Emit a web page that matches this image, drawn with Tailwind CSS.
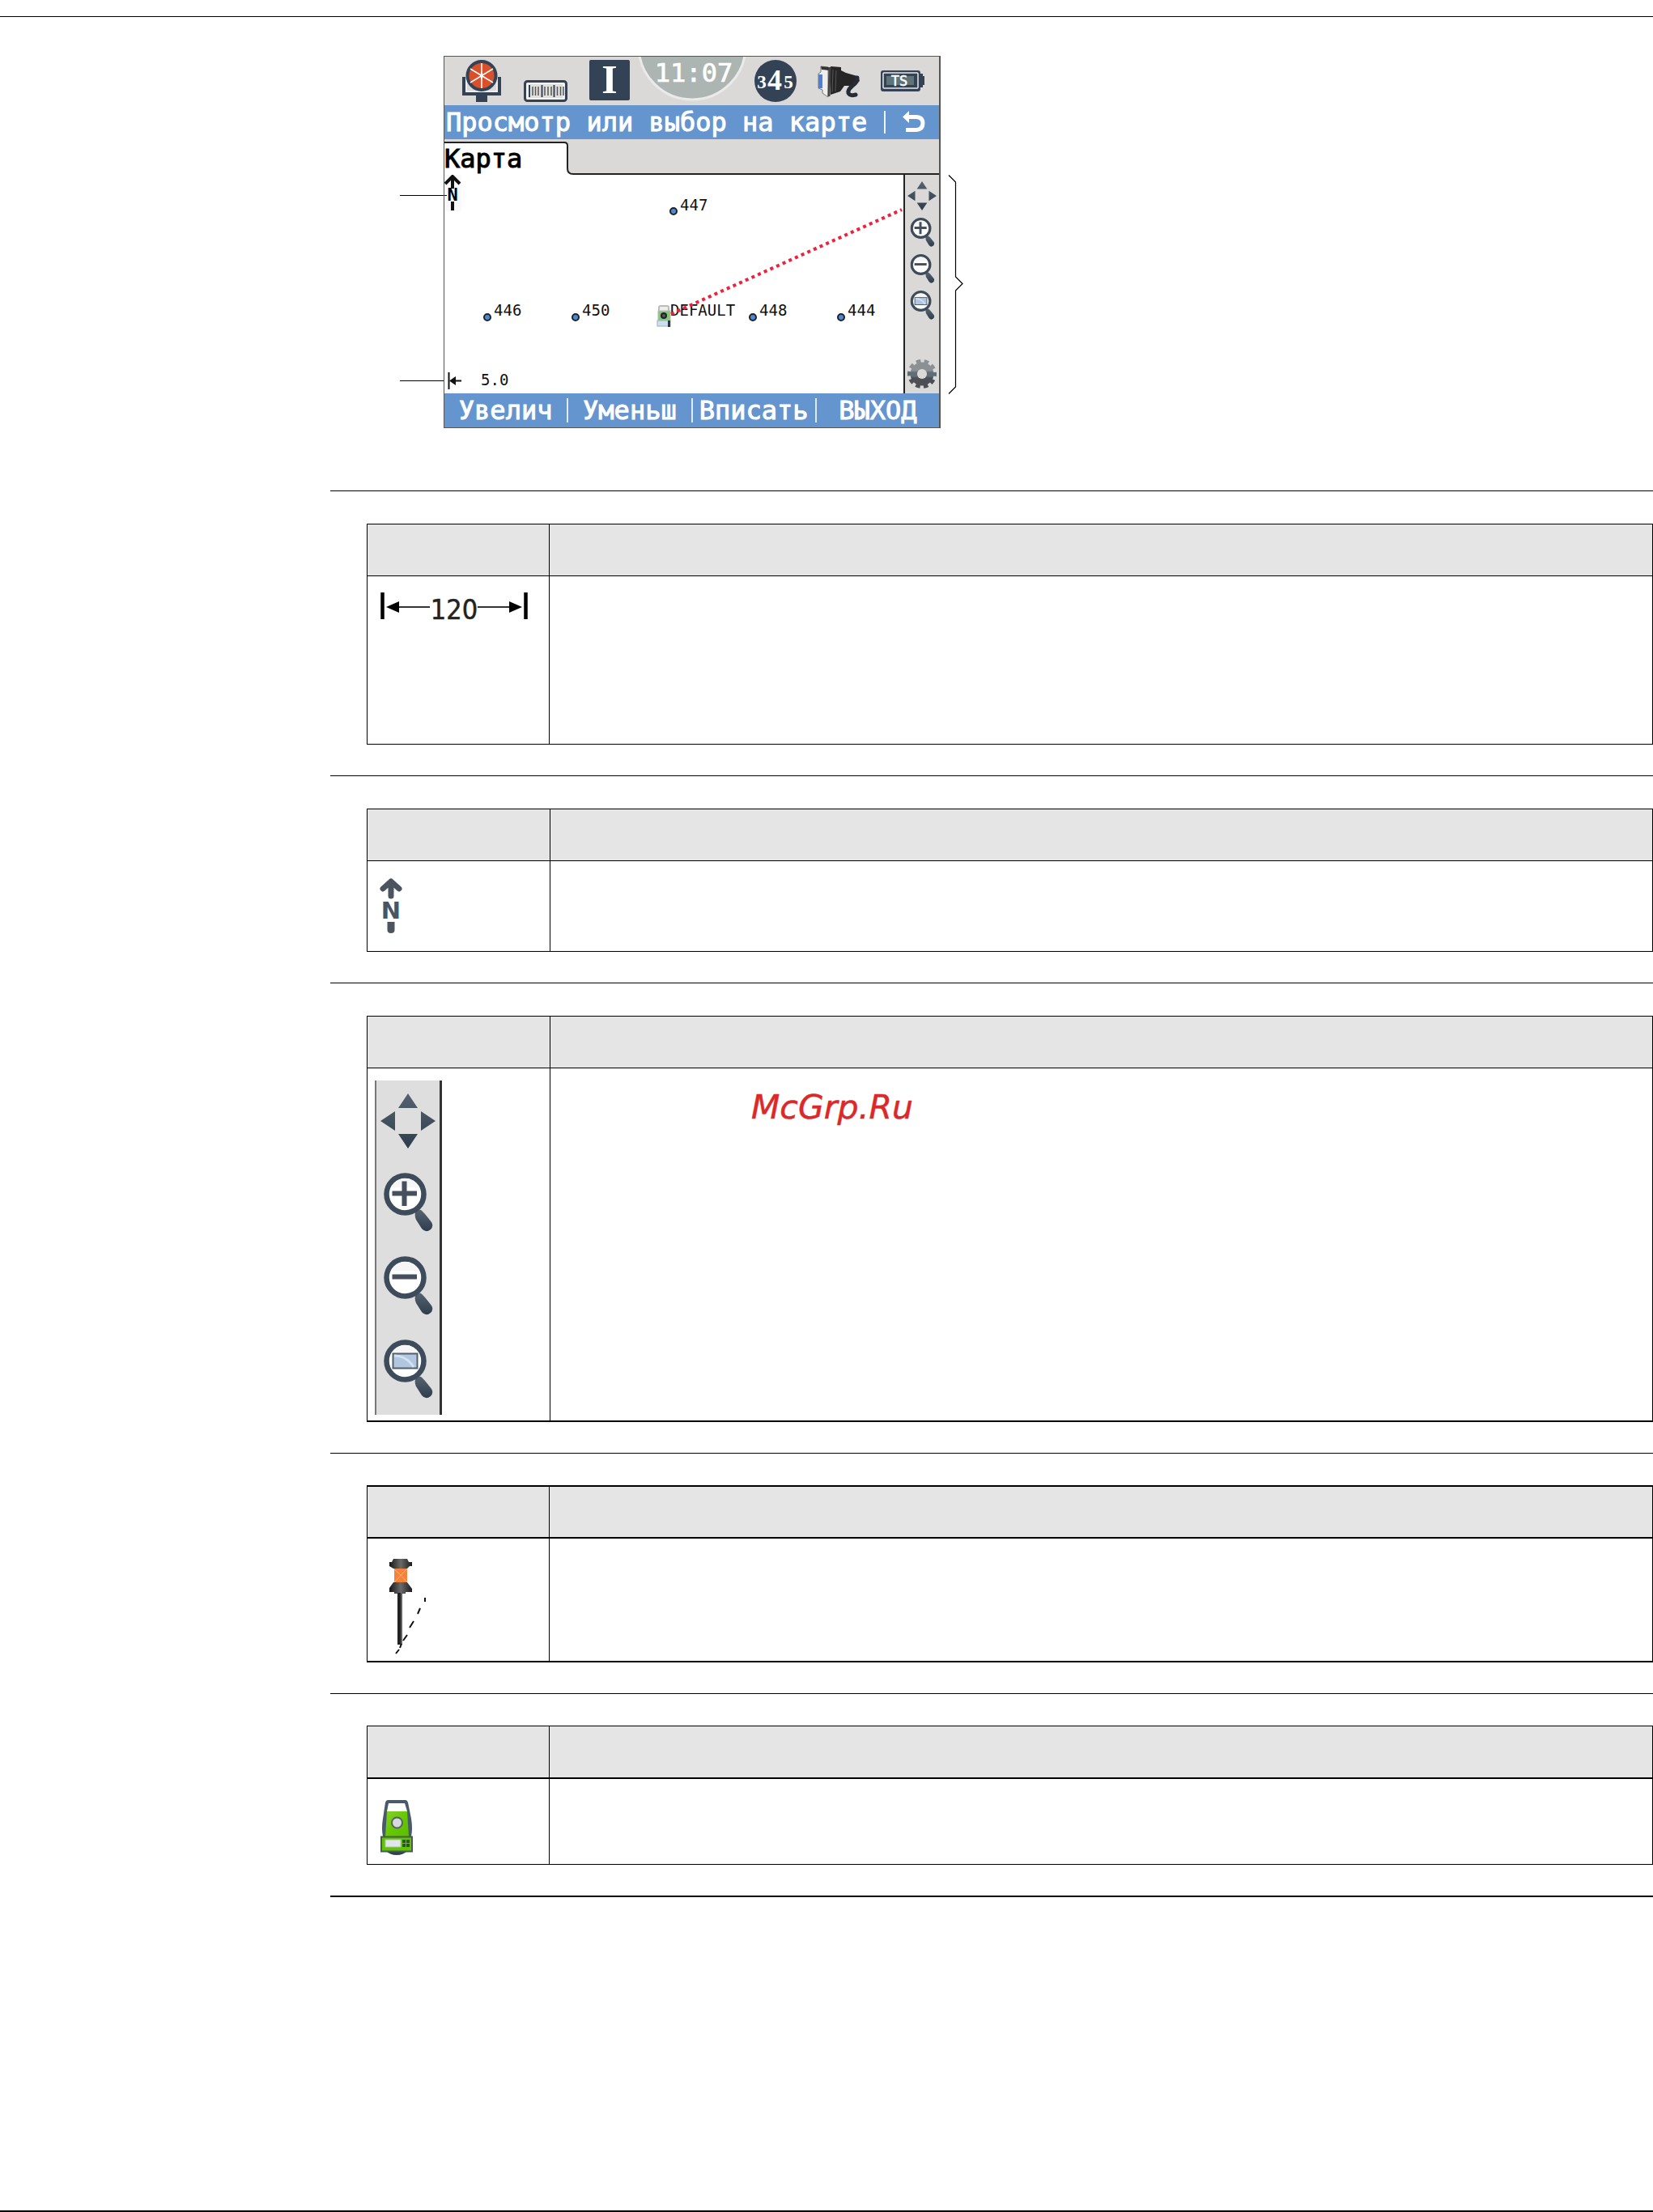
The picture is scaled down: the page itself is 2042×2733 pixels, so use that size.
<!DOCTYPE html>
<html lang="ru">

<head>
    <meta charset="UTF-8">
    <meta name="viewport" content="width=device-width, initial-scale=1.0">
    <title>Просмотр или выбор на карте</title>
    <script src="https://cdn.jsdelivr.net/npm/@tailwindcss/browser@4"></script>
</head>

<body class="flex min-h-screen flex-col bg-white font-['DejaVu_Sans',sans-serif] text-black">

    <!-- Shared icon shapes -->
    <svg class="absolute h-0 w-0" aria-hidden="true">
        <defs>
            <linearGradient id="steel" x1="0" y1="0" x2="0" y2="1">
                <stop offset="0" stop-color="#566270" />
                <stop offset="1" stop-color="#2e3d4c" />
            </linearGradient>
            <linearGradient id="gearFill" x1="0" y1="0" x2="0" y2="1">
                <stop offset="0.3" stop-color="#8b9094" />
                <stop offset="0.4" stop-color="#5f6d78" />
                <stop offset="0.65" stop-color="#5f6d78" />
                <stop offset="0.75" stop-color="#4c4f53" />
            </linearGradient>
            <linearGradient id="capFill" x1="0" y1="0" x2="1" y2="0">
                <stop offset="0" stop-color="#161616" />
                <stop offset="0.5" stop-color="#6a6a6a" />
                <stop offset="1" stop-color="#1c1c1c" />
            </linearGradient>
            <linearGradient id="bodyFill" x1="0" y1="0" x2="1" y2="1">
                <stop offset="0" stop-color="#86cf2c" />
                <stop offset="0.5" stop-color="#66c803" />
                <stop offset="1" stop-color="#5cbc00" />
            </linearGradient>
        </defs>
        <symbol id="pan" viewBox="0 0 68 68">
            <path d="M34 0L46 18H22ZM34 68L46 50H22ZM0 34L18 22V46ZM68 34L50 22V46Z" fill="url(#steel)" />
        </symbol>
        <symbol id="lens" viewBox="0 0 61 73">
            <path d="M39 49Q41 45 46 46Q49 48 59 61Q62 66 58 70Q52 75 47 69L40 58Q38 54 39 49Z" fill="url(#steel)" />
            <circle cx="26.500" cy="26.500" r="23" fill="#fff" stroke="#3d4b5a" stroke-width="6.500" />
            <path d="M9 18A19.500 19.500 0 0 1 44 18Z" fill="#f6f6f6" />
        </symbol>
        <symbol id="zoom-in" viewBox="0 0 61 73">
            <use href="#lens" width="61" height="73" />
            <path d="M10.500 25.500H41M25.500 10.500V41" stroke="#454f5e" stroke-width="6" />
        </symbol>
        <symbol id="zoom-out" viewBox="0 0 61 73">
            <use href="#lens" width="61" height="73" />
            <path d="M10.500 25.500H41" stroke="#454f5e" stroke-width="6" />
        </symbol>
        <symbol id="zoom-fit" viewBox="0 0 61 73">
            <use href="#lens" width="61" height="73" />
            <rect x="11.500" y="17.500" width="30" height="18" fill="#b3c6e0" stroke="#50606f" stroke-width="2" />
            <path d="M13 20Q28 20 37 34" fill="none" stroke="#d3e2f2" stroke-width="3" />
        </symbol>
        <symbol id="gear" viewBox="0 0 36 36">
            <circle cx="18" cy="18" r="15.500" fill="none" stroke="url(#gearFill)" stroke-width="5" stroke-dasharray="5.500 4.239" stroke-dashoffset="2.700" />
            <circle cx="18" cy="18" r="10" fill="#dad9d7" stroke="url(#gearFill)" stroke-width="9" />
            <circle cx="18" cy="18" r="6" fill="#dad9d7" />
        </symbol>
    </svg>

    <header class="mt-5 border-t border-black"></header>

    <figure class="mt-12 flex pl-[494px]">
        <!-- Leader lines to the north arrow and the scale -->
        <svg class="h-[460px] w-[54px] shrink-0" viewBox="0 0 54 460" aria-hidden="true">
            <path d="M0 172.500H54M0 401.500H54" stroke="#000" />
        </svg>

        <div class="w-[614px] shrink-0 border border-r-2 border-[#555] bg-[#dad9d7] font-['DejaVu_Sans_Mono',monospace] text-[32px]">

            <!-- Status bar -->
            <div class="flex h-[60px] items-start px-1.5">
                <div class="flex flex-1 justify-center pt-1">
                    <svg class="h-[52px] w-[54px]" viewBox="0 0 54 52" aria-label="Prism">
                        <path d="M5 21V42H49V21" fill="none" stroke="#344256" stroke-width="4" />
                        <path d="M8 24V39H46V24" fill="none" stroke="#eee" stroke-width="2" />
                        <rect x="20" y="42" width="14" height="10" fill="#344256" />
                        <circle cx="27" cy="19.500" r="17.500" fill="#d9502a" stroke="#344256" stroke-width="4" />
                        <path d="M27 4V35M13 11L41 28M41 11L13 28" stroke="#fff" stroke-width="1.500" />
                        <path d="M27 14L29 19L27 25L25 19Z" fill="#fff" />
                    </svg>
                </div>
                <div class="flex flex-1 justify-center pt-1">
                    <svg class="h-[52px] w-[54px]" viewBox="0 0 54 52" aria-label="Level">
                        <rect x="1.500" y="26.500" width="51" height="24" rx="3" fill="#f2f2f2" stroke="#344256" stroke-width="3" />
                        <path d="M6 30H48V47H6Z" fill="#e0e0de" />
                        <path d="M7 31V46M22.500 31V46M37.500 31V46" stroke="#344256" stroke-width="2" />
                        <path d="M11 33V44M14.500 33V44M18 33V44M26 33V44M30 33V44M34 33V44M41.500 33V44M45.500 33V44M49 33V44" stroke="#555" stroke-width="1.500" />
                    </svg>
                </div>
                <div class="flex flex-1 justify-center pt-1">
                    <svg class="h-[52px] w-[54px] overflow-visible font-['Liberation_Serif',serif] font-bold" viewBox="0 0 54 52">
                        <rect x="2" y="0" width="50" height="50" rx="2" fill="#344256" />
                        <text x="27" y="41" text-anchor="middle" font-size="50" fill="#fff">I</text>
                    </svg>
                </div>
                <div class="flex w-[125px] shrink-0 justify-center">
                    <svg class="h-[58px] w-[136px] shrink-0" viewBox="0 0 136 58">
                        <circle cx="68" cy="-13" r="66" fill="#adb5b3" stroke="#eaeaea" stroke-width="3" />
                        <text x="70" y="31" text-anchor="middle" font-size="32" fill="#fff" stroke="#fff" stroke-width="0.700">11:07</text>
                    </svg>
                </div>
                <div class="flex flex-1 justify-center pt-1">
                    <svg class="h-[52px] w-[54px] font-['Liberation_Serif',serif] font-bold" viewBox="0 0 54 52">
                        <circle cx="28" cy="26" r="26" fill="#344256" />
                        <text x="11" y="35" text-anchor="middle" font-size="23" fill="#fff">3</text>
                        <text x="27" y="37" text-anchor="middle" font-size="36" fill="#fff">4</text>
                        <text x="44" y="35" text-anchor="middle" font-size="23" fill="#fff">5</text>
                    </svg>
                </div>
                <div class="flex flex-1 justify-center pt-1">
                    <svg class="h-[52px] w-[54px]" viewBox="0 0 54 52" aria-label="Plug">
                        <path d="M5 8L14 9V46L7 41V37L2 35V17L5 15Z" fill="#eee" stroke="#777" />
                        <path d="M2 18H7V35H2Z" fill="#4a80d8" />
                        <path d="M5 8L15 9V13L6 12Z" fill="#333" />
                        <path d="M17 8L30 9V13L36 16L50 20L53 26L45 32L34 32L29 39L17 43Z" fill="#262626" />
                        <path d="M50 22Q51 27 44 32Q38 37 39 41Q41 45 48 43" fill="none" stroke="#262c36" stroke-width="5" stroke-linecap="round" />
                        <path d="M16 9L15 45" stroke="#444" stroke-width="3" />
                        <path d="M20 12L19 40M24 13L23 39" stroke="#555" />
                    </svg>
                </div>
                <div class="flex flex-1 justify-center pt-1">
                    <svg class="h-[52px] w-[54px]" viewBox="0 0 54 52">
                        <path d="M48 17H52V20H54V31H52V34H48Z" fill="#344256" />
                        <rect x="0" y="13" width="49" height="26" rx="3" fill="#344256" />
                        <rect x="3" y="16" width="43" height="19" rx="1" fill="#344256" stroke="#e8e8e8" stroke-width="1.500" />
                        <rect x="7" y="20" width="34" height="11" fill="#5f7478" />
                        <text x="23" y="32" text-anchor="middle" font-size="17" fill="#fff" stroke="#fff" stroke-width="0.500">TS</text>
                    </svg>
                </div>
            </div>

            <!-- Title bar -->
            <div class="flex items-center bg-[#6495ce] text-white">
                <h1 class="flex-1 pl-0.5 leading-[42px] whitespace-nowrap [-webkit-text-stroke:1px]">Просмотр или выбор на карте</h1>
                <div class="h-7 w-0.5 bg-white/90"></div>
                <button type="button" class="flex w-[66px] justify-center pl-1" aria-label="Назад">
                    <svg class="h-7 w-7" viewBox="0 0 28 28">
                        <path d="M6 7.500H17Q25 8 25 15Q25 23 17 23.500H4" fill="none" stroke="#fff" stroke-width="5" />
                        <path d="M0 7.500L8 0V15Z" fill="#fff" />
                    </svg>
                </button>
            </div>

            <!-- Tab strip -->
            <div class="flex h-[44px]">
                <button type="button" class="mt-[3px] w-[145px] border-t-2 border-[#222] bg-white text-left leading-[39px] [-webkit-text-stroke:1px]">Карта</button>
                <svg class="h-[44px] w-[18px]" viewBox="0 0 18 44" aria-hidden="true">
                    <path d="M0 4H3Q7 4 7 8V36Q7 43 14 43H18V44H0Z" fill="#fff" />
                    <path d="M0 4H3Q7 4 7 8V36Q7 43 14 43H18" fill="none" stroke="#222" stroke-width="2" />
                </svg>
                <div class="flex-1 border-b-2 border-[#222]"></div>
            </div>

            <!-- Map and its tools -->
            <div class="flex h-[270px]">
                <svg class="h-[270px] min-w-0 flex-1 bg-white" viewBox="0 0 567 270" font-size="19" aria-label="Карта">
                    <rect x="0" y="0" width="21" height="45" fill="#fafafa" />
                    <path d="M10 3V17M1 11L10 2L19 11M10 33V44" fill="none" stroke="#111" stroke-width="4" />
                    <text x="10" y="32" text-anchor="middle" font-size="22" font-weight="bold">N</text>
                    <path d="M0 25.500H3" stroke="#000" />

                    <g fill="#4a8ad8" stroke="#222" stroke-width="2">
                        <circle cx="283" cy="45" r="4" />
                        <circle cx="53" cy="176" r="4" />
                        <circle cx="162" cy="176" r="4" />
                        <circle cx="381" cy="176" r="4" />
                        <circle cx="490" cy="176" r="4" />
                    </g>
                    <g fill="#111">
                        <text x="291" y="44">447</text>
                        <text x="61" y="174">446</text>
                        <text x="170" y="174">450</text>
                        <text x="279" y="174">DEFAULT</text>
                        <text x="389" y="174">448</text>
                        <text x="498" y="174">444</text>
                        <text x="45" y="260">5.0</text>
                    </g>

                    <rect x="265" y="162" width="12" height="8" rx="2" fill="#eee" stroke="#bbb" stroke-width="2" />
                    <rect x="264" y="168" width="15" height="12" fill="#86c67c" stroke="#bbb" />
                    <circle cx="271" cy="174" r="3" fill="#556" stroke="#222" stroke-width="2" />
                    <rect x="263" y="180" width="16" height="7" fill="#c6e2f2" stroke="#aaa" />
                    <path d="M277.500 180V188" stroke="#333" stroke-width="3" />
                    <path d="M280 172L565 43" stroke="#f0203c" stroke-width="4" stroke-dasharray="4 4.400" />

                    <path d="M5.500 244V265" stroke="#111" stroke-width="2" />
                    <path d="M8 254.500H21" stroke="#111" stroke-width="2" />
                    <path d="M6 254.500L14 249V260Z" fill="#111" />
                </svg>
                <div class="flex w-11 shrink-0 flex-col items-center gap-[9px] border-l-2 border-[#222] pt-2 pb-1.5">
                    <button type="button" aria-label="Сдвиг"><svg class="h-9 w-9"><use href="#pan" /></svg></button>
                    <button type="button" aria-label="Увеличить"><svg class="h-9 w-[31px]"><use href="#zoom-in" /></svg></button>
                    <button type="button" aria-label="Уменьшить"><svg class="h-9 w-[31px]"><use href="#zoom-out" /></svg></button>
                    <button type="button" aria-label="Вписать"><svg class="h-9 w-[31px]"><use href="#zoom-fit" /></svg></button>
                    <button type="button" class="mt-auto" aria-label="Настройки"><svg class="h-9 w-9"><use href="#gear" /></svg></button>
                </div>
            </div>

            <!-- Soft keys -->
            <div class="flex items-center bg-[#6495ce] leading-[42px] text-white [-webkit-text-stroke:1px]">
                <button type="button" class="flex-1 basis-0">Увелич</button>
                <div class="h-[30px] w-0.5 bg-white/80"></div>
                <button type="button" class="flex-1 basis-0">Уменьш</button>
                <div class="h-[30px] w-0.5 bg-white/80"></div>
                <button type="button" class="flex-1 basis-0">Вписать</button>
                <div class="h-[30px] w-0.5 bg-white/80"></div>
                <button type="button" class="flex-1 basis-0">ВЫХОД</button>
            </div>
        </div>

        <!-- Brace beside the tools -->
        <svg class="mt-[147px] ml-[9px] h-[271px] w-5 shrink-0" viewBox="0 0 20 271" aria-hidden="true">
            <path d="M1 0.500L9.500 9V126L18 134.500L9.500 143V262L1 270.500" fill="none" stroke="#000" stroke-width="1.200" />
        </svg>
    </figure>

    <main class="mt-[77px] ml-[408px]">
        <section class="border-t border-black pt-10 pb-[38px] pl-[45px]">
            <table class="w-full table-fixed border-separate border-spacing-0 border-t border-l border-black">
                <tr class="h-16 bg-[#e5e5e5]">
                    <th class="w-[225px] border-r border-b border-black"></th>
                    <th class="border-r border-b border-black"></th>
                </tr>
                <tr class="h-[208px] align-top">
                    <td class="border-r border-b border-black pt-5 pl-4">
                        <svg class="h-[34px] w-[182px] overflow-visible font-['DejaVu_Sans_Condensed','DejaVu_Sans',sans-serif]" viewBox="0 0 182 34">
                            <path d="M2.500 0V33M179.500 0V33" stroke="#000" stroke-width="4.500" />
                            <path d="M20 18H61M120 18H162" stroke="#333" stroke-width="2" />
                            <path d="M7 18L23 11V25ZM175 18L159 11V25Z" />
                            <text x="91" y="33" text-anchor="middle" font-size="34" fill="#222" stroke="#222" stroke-width="0.500">120</text>
                        </svg>
                    </td>
                    <td class="border-r border-b border-black"></td>
                </tr>
            </table>
        </section>

        <section class="border-t border-black pt-10 pb-[38px] pl-[45px]">
            <table class="w-full table-fixed border-separate border-spacing-0 border-t border-l border-black">
                <tr class="h-16 bg-[#e5e5e5]">
                    <th class="w-[226px] border-r border-b border-black"></th>
                    <th class="border-r border-b border-black"></th>
                </tr>
                <tr class="h-28 align-top">
                    <td class="border-r border-b border-black pt-5 pl-[15px]">
                        <svg class="h-[70px] w-7" viewBox="0 0 28 70">
                            <path d="M4 14L14 5L24 14M14 7V23" fill="none" stroke="#4b545f" stroke-width="7" stroke-linecap="round" stroke-linejoin="round" />
                            <path d="M9.500 55H18.500V65Q18.500 69 14 69Q9.500 69 9.500 65Z" fill="#4b545f" />
                            <text x="14" y="51" text-anchor="middle" font-size="29" font-weight="bold" fill="#4b545f">N</text>
                        </svg>
                    </td>
                    <td class="border-r border-b border-black"></td>
                </tr>
            </table>
        </section>

        <section class="border-t border-black pt-10 pb-[38px] pl-[45px]">
            <table class="w-full table-fixed border-separate border-spacing-0 border-t border-l border-black">
                <tr class="h-16 bg-[#e5e5e5]">
                    <th class="w-[226px] border-r border-b border-black"></th>
                    <th class="border-r border-b border-black"></th>
                </tr>
                <tr class="h-[437px] align-top">
                    <td class="border-r border-b-2 border-black pt-[15px] pl-[9px]">
                        <div class="flex h-[413px] w-[83px] flex-col items-center gap-[30px] border-r-3 border-l-2 border-r-[#333] border-l-[#777] bg-[#dedede] pt-4">
                            <svg class="h-[68px] w-[68px]"><use href="#pan" /></svg>
                            <svg class="h-[73px] w-[61px]"><use href="#zoom-in" /></svg>
                            <svg class="h-[73px] w-[61px]"><use href="#zoom-out" /></svg>
                            <svg class="h-[73px] w-[61px]"><use href="#zoom-fit" /></svg>
                        </div>
                    </td>
                    <td class="border-r border-b-2 border-black pt-6 pl-62">
                        <a href="#" class="text-[41px] leading-[48px] text-[#dc2828] italic [-webkit-text-stroke:0.5px]">McGrp.Ru</a>
                    </td>
                </tr>
            </table>
        </section>

        <section class="border-t border-black pt-[39px] pb-[38px] pl-[45px]">
            <table class="w-full table-fixed border-separate border-spacing-0 border-t-2 border-l border-black">
                <tr class="h-16 bg-[#e5e5e5]">
                    <th class="w-[225px] border-r border-b-2 border-black"></th>
                    <th class="border-r border-b-2 border-black"></th>
                </tr>
                <tr class="h-[153px] align-top">
                    <td class="border-r border-b-2 border-black pt-6 pl-[26px]">
                        <svg class="h-[120px] w-[48px]" viewBox="0 0 48 120">
                            <rect x="7" y="12" width="16" height="19" fill="#f5823a" />
                            <path d="M7 30L23 13M7 14L16 22L23 30" fill="none" stroke="#ffb27a" />
                            <path d="M6 1H23L25 5H29V10H26L23 13H6L1 10V5H4Z" fill="url(#capFill)" />
                            <path d="M6 30H23L29 38V42H21V44H7V42H1V37Z" fill="url(#capFill)" />
                            <rect x="11" y="43" width="6" height="64" fill="#222" />
                            <path d="M16 43V107" stroke="#777" stroke-width="1.500" />
                            <path d="M45 49V54M39 62L36 69M31 78L26 86M23 95L18 102M16 106L14 111M13 113L9 118" stroke="#111" stroke-width="2" />
                        </svg>
                    </td>
                    <td class="border-r border-b-2 border-black"></td>
                </tr>
            </table>
        </section>

        <section class="border-t border-b-2 border-black pt-[39px] pb-[38px] pl-[45px]">
            <table class="w-full table-fixed border-separate border-spacing-0 border-t border-l border-black">
                <tr class="h-[65px] bg-[#e5e5e5]">
                    <th class="w-[225px] border-r border-b-2 border-black"></th>
                    <th class="border-r border-b-2 border-black"></th>
                </tr>
                <tr class="h-[106px] align-top">
                    <td class="border-r border-b border-black pt-[25px] pl-4">
                        <svg class="h-[70px] w-10" viewBox="0 0 40 70">
                            <path d="M7 64H33Q28 69 20 69Q12 69 7 64Z" fill="#2f4054" />
                            <path d="M9 1H31Q33 1 34 4L38 24Q40 36 38 46H3Q1 36 3 24L6 4Q7 1 9 1Z" fill="#4a5a6a" />
                            <path d="M10 5H30L33 15H8Z" fill="#fff" />
                            <path d="M8 15H33L35 46H6Z" fill="url(#bodyFill)" />
                            <circle cx="20.500" cy="29" r="6.500" fill="#d6d9dc" stroke="#5a5f64" stroke-width="2" />
                            <rect x="1" y="46.500" width="38" height="18" fill="#5fc404" stroke="#4a5a50" stroke-width="2" />
                            <rect x="6" y="50" width="19" height="9" fill="#e2e6ea" stroke="#a8c890" />
                            <path d="M27 50H31V54H27ZM32 50H36V54H32ZM27 55H31V59H27ZM32 55H36V59H32Z" fill="#2c5520" />
                        </svg>
                    </td>
                    <td class="border-r border-b border-black"></td>
                </tr>
            </table>
        </section>
    </main>

    <footer class="mt-auto border-t-2 border-black"></footer>
</body>

</html>
